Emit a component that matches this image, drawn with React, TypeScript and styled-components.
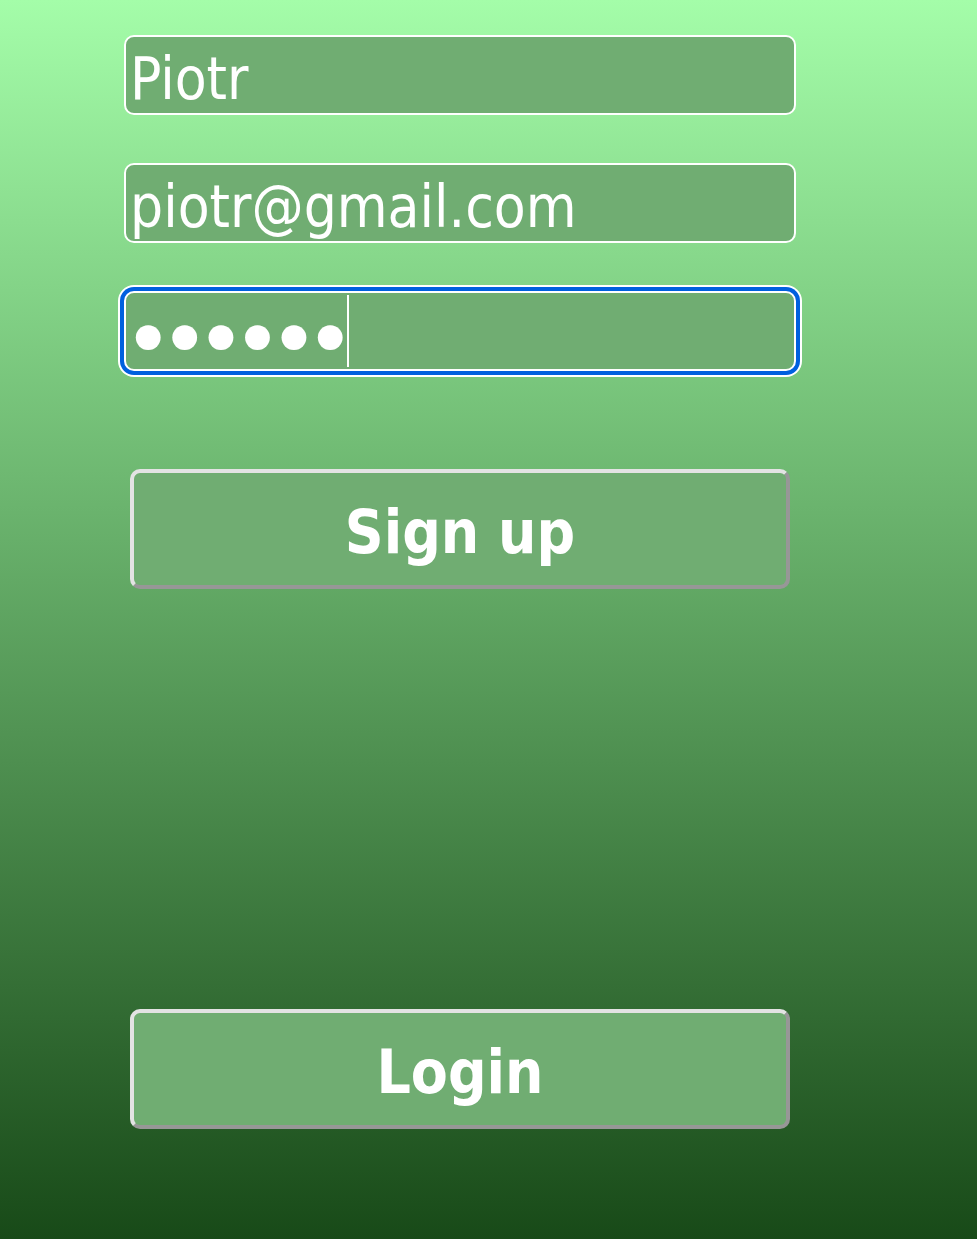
import React, { useState } from "react";
import styled, { createGlobalStyle, css } from "styled-components";

const GlobalStyle = createGlobalStyle`
  * { box-sizing: border-box; }
  body {
    margin: 0;
    font-family: Tahoma, "DejaVu Sans Condensed", "DejaVu Sans", sans-serif;
    font-stretch: condensed;
  }
`;

const Page = styled.main`
  min-height: 100vh;
  padding: 35px 57px 110px 0;
  background: linear-gradient(#a4fda9, #184a18);
`;

const Form = styled.form`
  display: flex;
  flex-direction: column;
  width: 100%;
  max-width: 672px;
  margin: 0 auto;
`;

const Fields = styled.div`
  display: grid;
  gap: 48px;
`;

const Actions = styled.div`
  display: grid;
  gap: 420px;
  padding: 98px 6px 0;
`;

const Field = styled.label`
  position: relative;
  display: block;
`;

const Input = styled.input<{ $active?: boolean }>`
  display: block;
  width: 100%;
  height: 80px;
  padding: 8px 4px 0;
  border: 2px solid #fff;
  border-radius: 10px;
  outline: none;
  background: #70ad72;
  color: #fff;
  font-family: inherit;
  font-stretch: inherit;
  font-size: 58px;

  ${(p) =>
    p.$active &&
    css`
      box-shadow: 0 0 0 4px #0060df, 0 0 0 6px #fff;
    `}
`;

const PasswordInput = styled(Input)`
  padding-top: 10px;
  font-family: "Liberation Serif", serif;
  font-size: 104px;
  line-height: 66px;
  caret-color: transparent;
`;

const Caret = styled.span`
  position: absolute;
  top: 4px;
  bottom: 4px;
  left: 223px;
  width: 2px;
  background: #fff;
`;

const Button = styled.button`
  height: 120px;
  padding: 6px 6px 0;
  border: 4px solid;
  border-color: #e3e3e3 #979797 #979797 #e3e3e3;
  border-radius: 10px;
  background: #70ad72;
  color: #fff;
  font-family: inherit;
  font-stretch: inherit;
  font-size: 60px;
  font-weight: 700;
`;

export default function App() {
  const [name, setName] = useState("Piotr");
  const [email, setEmail] = useState("piotr@gmail.com");
  const [password, setPassword] = useState("secret");

  return (
    <>
      <GlobalStyle />
      <Page>
        <Form onSubmit={(e) => e.preventDefault()}>
          <Fields>
            <Field>
              <Input aria-label="Name" value={name} onChange={(e) => setName(e.target.value)} />
            </Field>
            <Field>
              <Input
                type="email"
                aria-label="Email"
                value={email}
                onChange={(e) => setEmail(e.target.value)}
              />
            </Field>
            <Field>
              <PasswordInput
                $active
                type="password"
                aria-label="Password"
                value={password}
                onChange={(e) => setPassword(e.target.value)}
              />
              <Caret aria-hidden="true" />
            </Field>
          </Fields>
          <Actions>
            <Button type="submit">Sign up</Button>
            <Button type="button">Login</Button>
          </Actions>
        </Form>
      </Page>
    </>
  );
}
